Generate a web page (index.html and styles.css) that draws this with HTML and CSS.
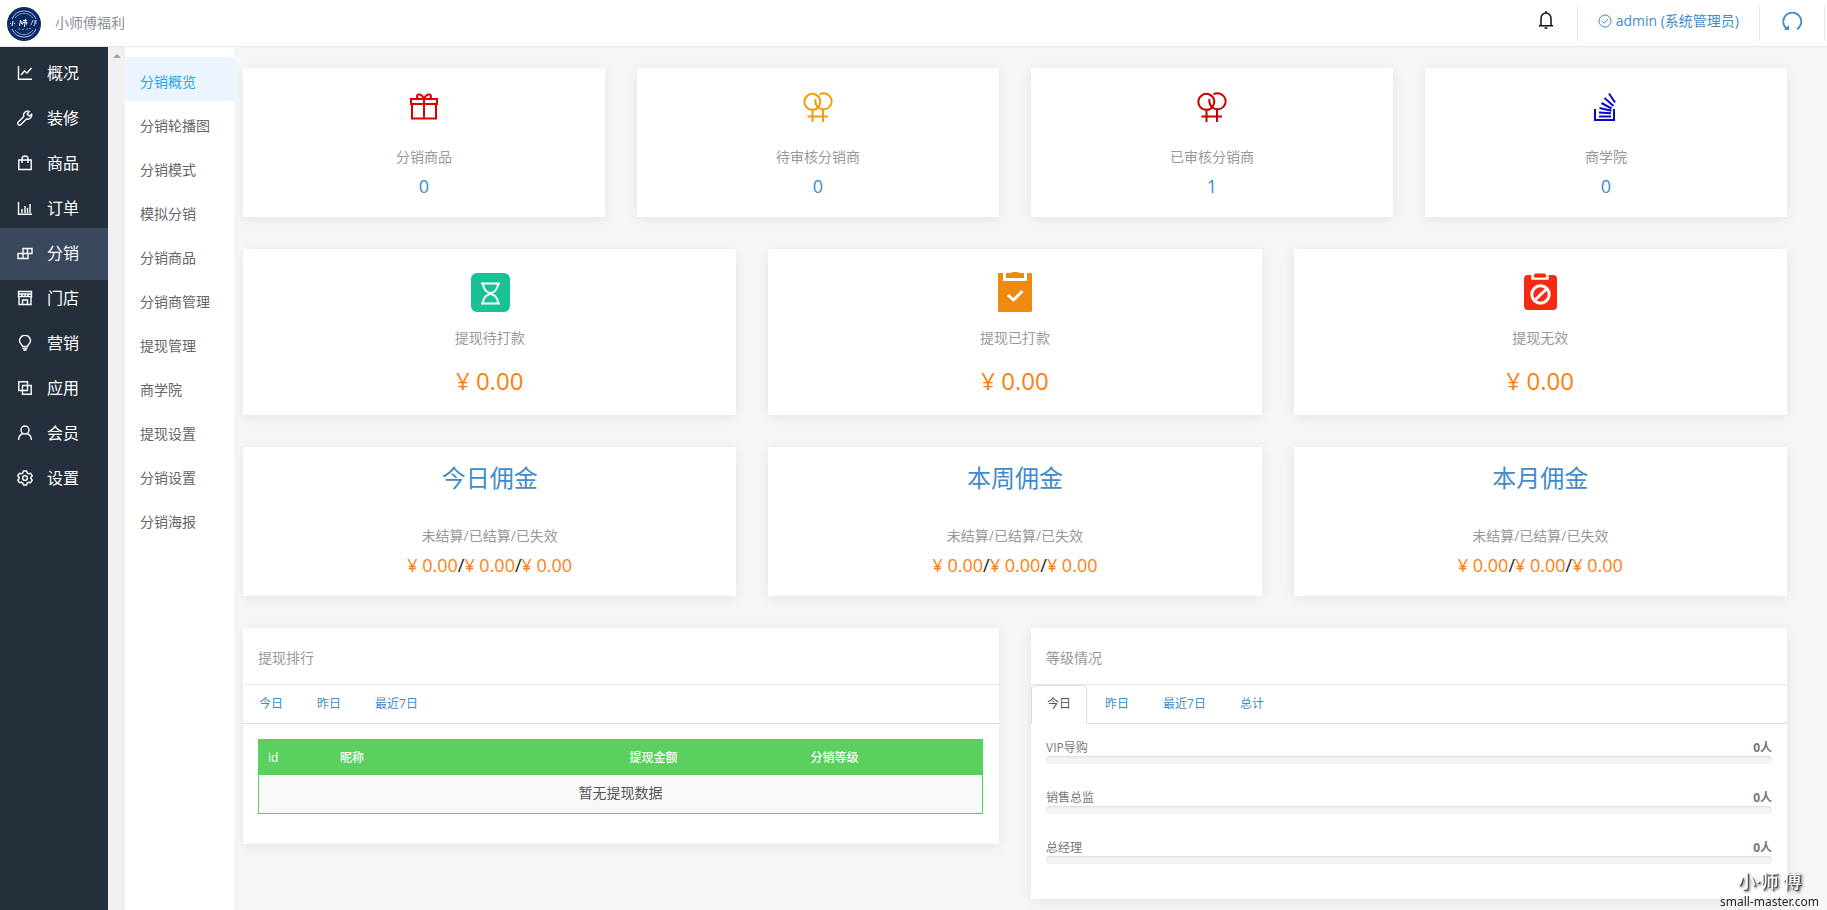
FILE: index.html
```html
<!DOCTYPE html>
<html lang="zh-CN">
<head>
<meta charset="utf-8">
<title>小师傅福利</title>
<link rel="stylesheet" href="styles.css">
</head>
<body>
<svg class="defs" width="0" height="0" aria-hidden="true">
  <symbol id="double-venus" viewBox="0 0 30 30">
    <g fill="none" stroke="currentColor" stroke-width="2">
      <path d="M15.500 15A8 8 0 1 1 17 7.500Q18 11 15.500 15"/>
      <path d="M16.500 2.500A8 8 0 1 1 15.500 15.500Q11.500 12 12.500 7"/>
      <path d="M9.500 17.500V30M20 17.500V30M4.500 24.500h20.500"/>
    </g>
  </symbol>
</svg>

<div class="shell">
  <header class="topbar">
    <svg class="logo" viewBox="0 0 34 34" aria-hidden="true">
      <circle cx="17" cy="17" r="17" fill="#0b2a66"/>
      <g fill="none" stroke="#b9c3d8">
        <path d="M5 12A13 13 0 0 1 29 12M5 22A13 13 0 0 0 29 22"/>
        <path d="M8 11A11 11 0 0 1 26 11M8 23A11 11 0 0 0 26 23" stroke="#8494b8"/>
        <path d="M11 22h2M15 22.500h2M19 22h2M22 21.500h2" stroke="#8494b8"/>
      </g>
      <g fill="none" stroke="#fff">
        <path d="M6 14l-1 5M3 17l1-1M7 16l1 1M13.500 13l-1 6M15 14l-.5 3M16 13.500h4M18.500 12l-1 8M16 15.500l-.5 2M16 15.500h4l-.5 2"/>
        <path d="M26 13l-2 5M26 14h4M27 16h3M29 13l-2 6" stroke="#a9b5cf"/>
      </g>
    </svg>
    <span class="brand">小师傅福利</span>
    <div class="tools">
      <button class="tool bell" type="button" aria-label="通知">
        <svg width="16" height="20" viewBox="0 0 16 20" fill="none" stroke="#111" stroke-width="1.500"><path d="M3 15.500V8.500a5 5.500 0 0 1 10 0v7M1 15.800h14M8 3V1M6.500 18h3"/></svg>
      </button>
      <a class="tool account" href="#">
        <svg width="14" height="14" viewBox="0 0 14 14" fill="none" stroke="currentColor"><circle cx="7" cy="7" r="6"/><path d="M4 7l2.300 2.200L10 5"/></svg>
        <span>admin (系统管理员)</span>
      </a>
      <button class="tool refresh" type="button" aria-label="刷新">
        <svg width="20" height="20" viewBox="0 0 20 20" fill="none" stroke="currentColor" stroke-width="1.800"><path d="M15 17.200A9 9 0 1 0 4.500 16.500"/><path d="M2 18h5v-5z" fill="currentColor" stroke="none"/></svg>
      </button>
    </div>
  </header>

  <div class="body">
    <nav class="main-nav" aria-label="主菜单">
      <a href="#"><svg viewBox="0 0 16 16"><path d="M1.500 1v13.200H15M4 10l3.500-4 2.500 2 4.500-5"/></svg>概况</a>
      <a href="#"><svg viewBox="0 0 16 16"><path d="M14.600 4.200l-2.400 1.800-2-2 1.900-2.500a4 4 0 0 0-5.300 5L1.300 12a1.700 1.700 0 0 0 2.600 2.600L9.500 9a4 4 0 0 0 5.100-4.800z"/></svg>装修</a>
      <a href="#"><svg viewBox="0 0 16 16"><path d="M1.800 5h12.400v9.500H1.800zM5 8V4a3 3 0 0 1 6 0v4"/></svg>商品</a>
      <a href="#"><svg viewBox="0 0 16 16"><path d="M1.500 2v12.200H15M5 13V9M8 13V6M10.500 13V8M13 13V4"/></svg>订单</a>
      <a href="#" class="active" aria-current="page"><svg viewBox="0 0 16 16"><path d="M6 3.500h9v5H6zM1 8.500h10v5H1zM10.500 3.500v5M6 8.500v5"/></svg>分销</a>
      <a href="#"><svg viewBox="0 0 16 16"><path d="M1.500 1.500h13V6.500h-13zM2 6.500v8h12v-8M1 4h14M5 4v2.500M8 4v2.500M11 4v2.500M5.500 14v-4h5v4"/></svg>门店</a>
      <a href="#"><svg viewBox="0 0 16 16"><path d="M5.500 11.500C5.500 9.500 2.500 8.800 2.500 5.800a5.500 5.500 0 0 1 11 0c0 3-3 3.700-3 5.700zM5.500 13.500h5M6.500 15.300h3"/></svg>营销</a>
      <a href="#"><svg viewBox="0 0 16 16"><path d="M1.800 1.800h8.700v8.700H1.800zM5.500 5.500h8.700v8.700H5.500z"/></svg>应用</a>
      <a href="#"><svg viewBox="0 0 16 16"><circle cx="8" cy="5" r="4"/><path d="M1.500 15c.3-3.600 2.500-6 5-6.500M14.500 15c-.3-3.600-2.500-6-5-6.500"/></svg>会员</a>
      <a href="#"><svg viewBox="0 0 16 16"><circle cx="8" cy="8" r="2.400"/><path d="M6.400 1h3.200l.6 2 1.300.8 2.100-.5 1.600 2.600L13.800 7.500v1l1.400 1.600-1.600 2.600-2.100-.5-1.300.8-.6 2H6.400l-.6-2-1.300-.8-2.100.5L.8 10.100l1.400-1.600v-1L.8 5.900l1.600-2.600 2.100.5L5.800 3z"/></svg>设置</a>
    </nav>
    <div class="rail" aria-hidden="true"><i class="rail-arrow"></i></div>
    <nav class="sub-nav" aria-label="分销菜单">
      <a href="#" class="active" aria-current="page">分销概览</a>
      <a href="#">分销轮播图</a>
      <a href="#">分销模式</a>
      <a href="#">模拟分销</a>
      <a href="#">分销商品</a>
      <a href="#">分销商管理</a>
      <a href="#">提现管理</a>
      <a href="#">商学院</a>
      <a href="#">提现设置</a>
      <a href="#">分销设置</a>
      <a href="#">分销海报</a>
    </nav>

    <main class="content">
      <section class="row four">
        <article class="card stat">
          <svg class="ico red" viewBox="0 0 30 30" fill="none" stroke="currentColor" stroke-width="2"><path d="M2 7h26v5H2zM3 12v14.500h24V12M15 7v19M15 7C13 2 8 1 8 4.500c0 1.500 1 2.500 3 2.500M15 7c2-5 7-6 7-2.500C22 6 21 7 19 7"/></svg>
          <p class="label">分销商品</p><a class="count" href="#">0</a>
        </article>
        <article class="card stat">
          <svg class="ico amber" viewBox="0 0 30 30"><use href="#double-venus"/></svg>
          <p class="label">待审核分销商</p><a class="count" href="#">0</a>
        </article>
        <article class="card stat">
          <svg class="ico crimson" viewBox="0 0 30 30"><use href="#double-venus"/></svg>
          <p class="label">已审核分销商</p><a class="count" href="#">1</a>
        </article>
        <article class="card stat">
          <svg class="ico blue" viewBox="0 0 30 30" fill="none" stroke="currentColor" stroke-width="2"><path d="M4 17v11h19V17M8 24.500h12M8 20.500l12 .8M8.500 16l12 2.800M10.500 11l10 5.500M13.500 6l9 8M18 1.500l6 9"/></svg>
          <p class="label">商学院</p><a class="count" href="#">0</a>
        </article>
      </section>

      <section class="row three">
        <article class="card cash">
          <svg class="badge" viewBox="0 0 40 40"><rect x="1" y="1" width="39" height="39" rx="6" fill="#19c295"/><path d="M11 11.500h19M11 31.500h19M13 12c1 13 14 6 15 19M28 12c-1 13-14 6-15 19" fill="none" stroke="#fff" stroke-width="2"/></svg>
          <p class="label">提现待打款</p><p class="amount">¥ 0.00</p>
        </article>
        <article class="card cash">
          <svg class="badge" viewBox="0 0 40 40"><rect x="3" y="1" width="34" height="39" rx="1" fill="#f0890f"/><path d="M9.500 0v7.500h21V0" fill="none" stroke="#fff" stroke-width="3"/><path d="M12 1h4.500V0h7v1H28v4.500H12z" fill="#f0890f"/><path d="M13 23l5.500 5 9-9" fill="none" stroke="#fff" stroke-width="3"/></svg>
          <p class="label">提现已打款</p><p class="amount">¥ 0.00</p>
        </article>
        <article class="card cash">
          <svg class="badge" viewBox="0 0 40 40"><rect x="4" y="3" width="33" height="35" rx="4" fill="#f42a12"/><path d="M12.500 2v4.500h15V2" fill="none" stroke="#fff" stroke-width="2.500"/><rect x="14.500" y="1.500" width="11" height="4" rx="1" fill="#f42a12"/><g fill="none" stroke="#fff" stroke-width="3"><circle cx="20.500" cy="22.500" r="8.700"/><path d="M15 28L26.500 17"/></g></svg>
          <p class="label">提现无效</p><p class="amount">¥ 0.00</p>
        </article>
      </section>

      <section class="row three">
        <article class="card fee">
          <h2>今日佣金</h2><p class="label">未结算/已结算/已失效</p>
          <p class="split"><b>¥ 0.00</b>/<b>¥ 0.00</b>/<b>¥ 0.00</b></p>
        </article>
        <article class="card fee">
          <h2>本周佣金</h2><p class="label">未结算/已结算/已失效</p>
          <p class="split"><b>¥ 0.00</b>/<b>¥ 0.00</b>/<b>¥ 0.00</b></p>
        </article>
        <article class="card fee">
          <h2>本月佣金</h2><p class="label">未结算/已结算/已失效</p>
          <p class="split"><b>¥ 0.00</b>/<b>¥ 0.00</b>/<b>¥ 0.00</b></p>
        </article>
      </section>

      <section class="row two">
        <article class="card panel">
          <h3>提现排行</h3>
          <div class="tabs">
            <a href="#">今日</a><a href="#">昨日</a><a href="#">最近7日</a>
          </div>
          <div class="rank">
            <table>
              <thead><tr><th class="c-id">id</th><th class="c-name">昵称</th><th class="c-sum">提现金额</th><th>分销等级</th></tr></thead>
              <tbody><tr><td colspan="4">暂无提现数据</td></tr></tbody>
            </table>
          </div>
        </article>
        <article class="card panel">
          <h3>等级情况</h3>
          <div class="tabs">
            <a href="#" class="active">今日</a><a href="#">昨日</a><a href="#">最近7日</a><a href="#">总计</a>
          </div>
          <ul class="levels">
            <li><span>VIP导购</span><strong>0人</strong><div class="bar"></div></li>
            <li><span>销售总监</span><strong>0人</strong><div class="bar"></div></li>
            <li><span>总经理</span><strong>0人</strong><div class="bar"></div></li>
          </ul>
        </article>
      </section>
    </main>
  </div>
</div>

<div class="watermark"><span class="mark-name">小·师 傅</span><span class="mark-site">small-master.com</span></div>
</body>
</html>
```
FILE: styles.css
```css
* { box-sizing: border-box; }
body {
  margin: 0;
  background: #f5f6f8;
  color: #555;
  font-family: "Open Sans", "Noto Sans CJK SC", sans-serif;
  font-size: 14px;
  line-height: 20px;
}
a { color: inherit; text-decoration: none; }
p, h2, h3, ul { margin: 0; padding: 0; font-weight: 400; list-style: none; }
button { border: 0; padding: 0; background: none; }
.defs { position: absolute; }

.shell { display: flex; flex-direction: column; min-height: 100vh; }

/* top bar */
.topbar {
  display: flex;
  align-items: center;
  height: 47px;
  padding: 0 2px 0 7px;
  background: #fff;
  border-bottom: 1px solid #e8e8e8;
}
.logo { width: 34px; height: 34px; margin-top: 2px; }
.brand { margin-left: 14px; color: #8a8f96; }
.tools { display: flex; margin-left: auto; color: #428bca; }
.tool {
  display: flex;
  align-items: center;
  height: 35px;
  border-right: 1px solid #e8e8e8;
  color: inherit;
}
.bell { padding: 0 23px 6px 0; }
.account { gap: 4px; padding: 0 20px 4px; }
.refresh { padding: 0 22px 3px; }

.body { display: flex; flex: 1; }

/* dark navigation */
.main-nav { width: 108px; padding-top: 1px; background: #242f3b; flex: none; }
.main-nav a {
  display: flex;
  align-items: center;
  gap: 14px;
  height: 52px;
  margin-bottom: -7px;
  padding: 0 0 2px 17px;
  color: #fff;
  font-size: 16px;
}
.main-nav a.active { background: #3a485d; }
.main-nav svg {
  width: 16px;
  height: 16px;
  fill: none;
  stroke: #fff;
  stroke-width: 1.4;
}
.rail { width: 17px; padding-top: 7px; background: #f1f1f1; flex: none; }
.rail-arrow {
  display: block;
  width: 8px;
  margin: 0 auto;
  border: 4px solid transparent;
  border-top: 0;
  border-bottom-color: #a3a3a3;
}

/* second level navigation */
.sub-nav { width: 109px; padding-top: 10px; background: #fff; flex: none; }
.sub-nav a { display: block; height: 44px; padding: 4px 0 0 15px; line-height: 42px; color: #666; }
.sub-nav a.active { background: #ecf5ff; color: #1ba5fa; }

/* cards */
.content { flex: 1; min-width: 0; padding: 21px 40px 0 9px; }
.row { display: grid; gap: 32px; align-items: start; margin-bottom: 32px; }
.row:last-child { margin-bottom: 0; }
.four { grid-template-columns: repeat(4, 1fr); }
.three { grid-template-columns: repeat(3, 1fr); }
.two { grid-template-columns: repeat(2, 1fr); }
.card { background: #fff; box-shadow: 0 2px 12px rgba(0, 0, 0, 0.08); }
.stat, .cash, .fee { display: flex; flex-direction: column; align-items: center; }
.label { color: #999; }

.stat { padding: 24px 0 19px; }
.ico { width: 30px; height: 30px; margin-bottom: 25px; }
.red { color: #e00000; }
.amber { color: #f39c12; }
.crimson { color: #c70000; }
.blue { color: #0a0ac8; }
.count { margin-top: 7px; color: #428bca; font-size: 18px; line-height: 24px; }

.cash { padding: 23px 0 18px; }
.badge { width: 40px; height: 40px; margin-bottom: 16px; }
.amount { margin-top: 17px; color: #ff7f0e; font-size: 24px; line-height: 32px; }

.fee { padding: 15px 0 19px; }
.fee h2 { margin-bottom: 32px; color: #428bca; font-size: 24px; line-height: 32px; }
.split { margin-top: 7px; color: #222; font-size: 18px; line-height: 24px; }
.split b { color: #ff7f0e; font-weight: 400; }

/* panels */
.panel h3 { padding: 20px 15px 16px; border-bottom: 1px solid #e8e8e8; color: #999; font-size: 14px; }
.tabs { display: flex; gap: 2px; border-bottom: 1px solid #ddd; color: #428bca; font-size: 12px; line-height: 18px; }
.tabs a { margin-bottom: -1px; padding: 9px 15px 10px; border: 1px solid transparent; }
.tabs a.active { border-color: #ddd #ddd #fff; border-radius: 4px 4px 0 0; background: #fff; color: #555; }

.rank { padding: 15px 16px 30px 15px; }
.rank table { width: 100%; table-layout: fixed; border-collapse: collapse; border: 1px solid #5ad05e; }
.rank th { padding: 9px 9px 8px; background: #5ad05e; color: #fff; font-size: 12px; line-height: 18px; font-weight: 500; text-align: left; }
.rank td { padding: 8px 9px 10px; background: #f9f9f9; text-align: center; }
.c-id { width: 10%; }
.c-name { width: 40%; }
.c-sum { width: 25%; }

.levels { padding: 15px 15px 35px; color: #777; font-size: 12px; line-height: 17px; }
.levels li { display: flex; flex-wrap: wrap; justify-content: space-between; margin-bottom: 25px; }
.levels li:last-child { margin-bottom: 0; }
.levels strong { font-weight: 700; }
.bar { width: 100%; height: 8px; border-radius: 4px; background: #f4f4f4; box-shadow: inset 0 1px 2px rgba(0, 0, 0, 0.1); }

/* site mark over the page corner */
.watermark {
  position: fixed;
  right: 8px;
  bottom: 0;
  display: flex;
  flex-direction: column;
  align-items: center;
  color: #222;
  font-family: "Noto Sans", "Noto Sans CJK SC", sans-serif;
  font-size: 12px;
  line-height: 16px;
}
.mark-name { color: #fff; font-size: 18px; line-height: 26px; font-weight: 500; text-shadow: 1px 1px 1px #333, 2px 2px 3px #555; }
.mark-site { text-shadow: 0 0 2px #fff; }
```
